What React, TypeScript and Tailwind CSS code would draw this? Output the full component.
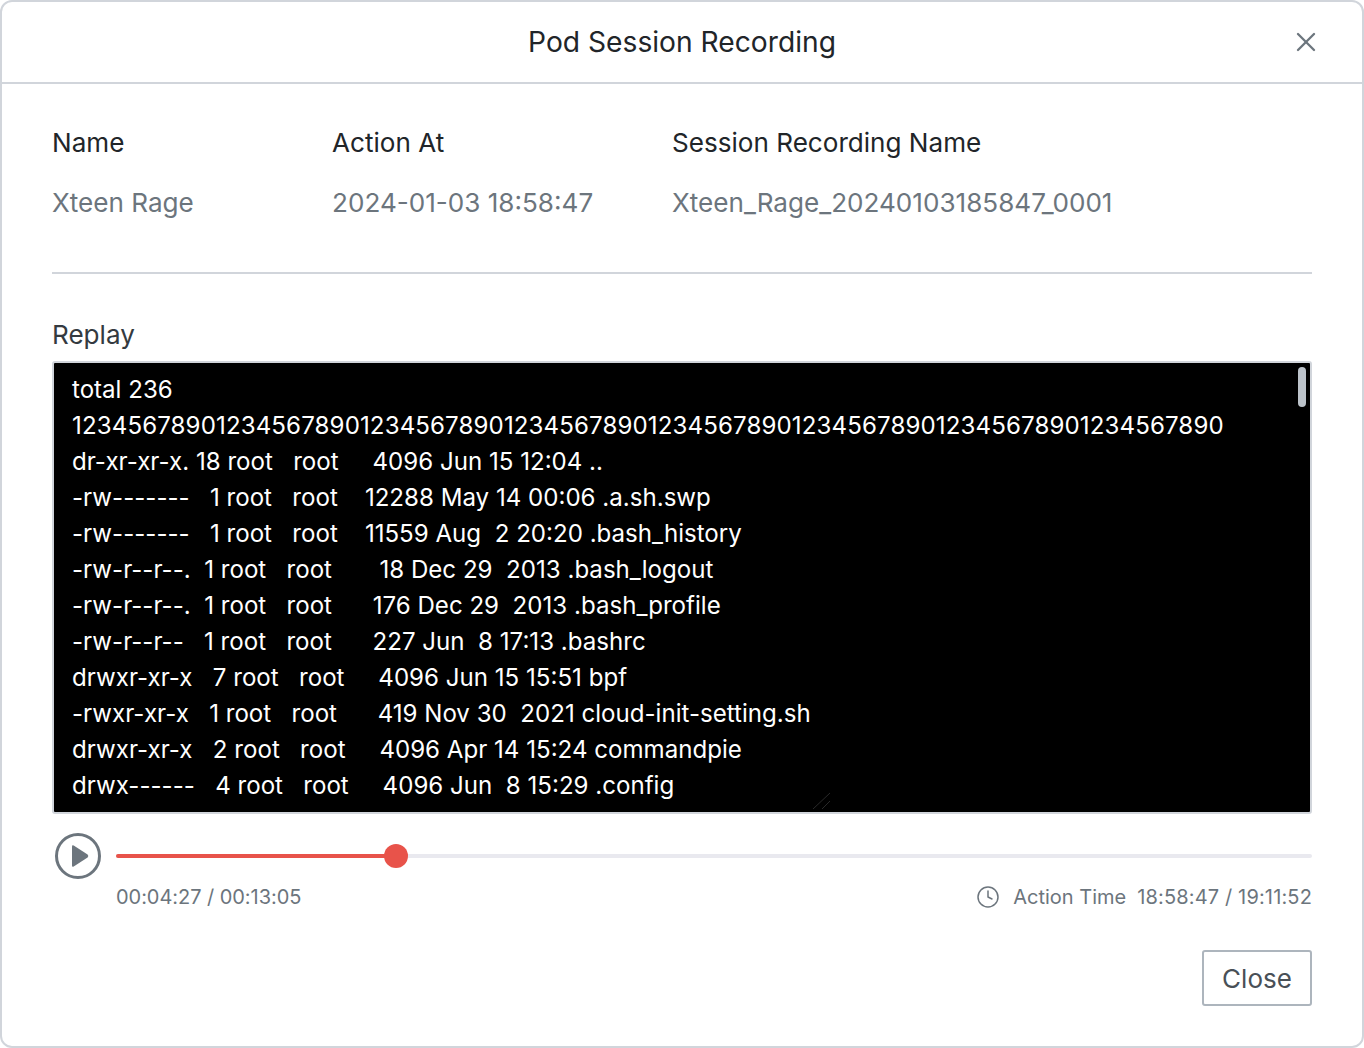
import { X, Clock } from "lucide-react";

const before = ["total 236"];
const digits = "12345678901234567890123456789012345678901234567890123456789012345678901234567890";
const lines = [
  "dr-xr-xr-x. 18 root   root     4096 Jun 15 12:04 ..",
  "-rw-------   1 root   root    12288 May 14 00:06 .a.sh.swp",
  "-rw-------   1 root   root    11559 Aug  2 20:20 .bash_history",
  "-rw-r--r--.  1 root   root       18 Dec 29  2013 .bash_logout",
  "-rw-r--r--.  1 root   root      176 Dec 29  2013 .bash_profile",
  "-rw-r--r--   1 root   root      227 Jun  8 17:13 .bashrc",
  "drwxr-xr-x   7 root   root     4096 Jun 15 15:51 bpf",
  "-rwxr-xr-x   1 root   root      419 Nov 30  2021 cloud-init-setting.sh",
  "drwxr-xr-x   2 root   root     4096 Apr 14 15:24 commandpie",
  "drwx------   4 root   root     4096 Jun  8 15:29 .config",
];

function InfoColumn({ label, value, className }: { label: string; value: string; className: string }) {
  return (
    <div className={className}>
      <div className="text-[26.1px] leading-[36px] text-[#212529]">{label}</div>
      <div className="mt-6 text-[26.1px] leading-[36px] text-[#6c757d]">{value}</div>
    </div>
  );
}

export default function App() {
  return (
    <div className="h-[1048px] w-[1364px] overflow-hidden rounded-xl border-2 border-[#d1d5db] bg-white font-['Inter',sans-serif]">
      <div className="relative flex h-[82px] items-center justify-center border-b-2 border-[#d1d5db]">
        <h1 className="text-[28.2px] leading-[36px] text-[#212529]">Pod Session Recording</h1>
        <button className="absolute right-[40px] top-[24px] text-[#6c757d]">
          <X size={32} strokeWidth={1.75} />
        </button>
      </div>

      <div className="px-[50px]">
        <div className="flex border-b-2 border-[#d1d5db] pt-[41px] pb-[51px]">
          <InfoColumn className="w-[280px]" label="Name" value="Xteen Rage" />
          <InfoColumn className="w-[340px]" label="Action At" value="2024-01-03 18:58:47" />
          <InfoColumn className="flex-1" label="Session Recording Name" value="Xteen_Rage_20240103185847_0001" />
        </div>

        <div className="mt-[43px] text-[26.1px] leading-[36px] text-[#343a40]">Replay</div>

        <div className="relative mt-[8px] h-[453px] overflow-hidden rounded-[3px] border-2 border-[#d1d5db] bg-black pt-[9px] pl-[18px]">
          <pre className="font-['Inter',sans-serif] text-[24.1px] leading-[36px] text-white">
            {before.join("\n")}
            {"\n"}
            <span className="tracking-[0.11px]">{digits}</span>
            {"\n"}
            {lines.join("\n")}
          </pre>
          <div className="absolute right-[4px] top-[4px] h-[40px] w-[8px] rounded-full bg-[#bcc3ca]" />
          <svg className="absolute bottom-[2px] left-[758px]" width="20" height="20" viewBox="0 0 20 20" stroke="#333333" strokeWidth="0.8">
            <path d="M1 19 L18 3" />
            <path d="M10 19 L18 11" />
          </svg>
        </div>

        <div className="mt-[18px] flex items-start">
          <svg width="48" height="48" viewBox="0 0 48 48" className="ml-[2px] shrink-0">
            <circle cx="24" cy="24" r="21.5" fill="none" stroke="#6c757d" strokeWidth="3" />
            <path d="M18 14.5 Q18 12.6 19.7 13.5 L33.6 22.6 Q35 24 33.6 25.4 L19.7 34.5 Q18 35.4 18 33.5 Z" fill="#6c757d" />
          </svg>
          <div className="ml-[14px] flex-1">
            <div className="relative mt-[22px] h-[4px] rounded-full bg-[#e9e9ef]">
              <div className="h-[4px] w-[280px] rounded-full bg-[#e8534a]" />
              <div className="absolute left-[268px] top-[-10px] h-[24px] w-[24px] rounded-full bg-[#e8534a]" />
            </div>
            <div className="mt-[24px] flex items-center justify-between text-[20px] leading-[30px] text-[#6c757d]">
              <span className="tracking-[-0.05px]">00:04:27 / 00:13:05</span>
              <span className="flex items-center">
                <Clock size={24} strokeWidth={1.5} className="mr-[13px]" />
                <span className="mr-[11px]">Action Time</span>
                <span className="tracking-[0.15px]">18:58:47 / 19:11:52</span>
              </span>
            </div>
          </div>
        </div>

        <div className="mt-[38px] flex justify-end">
          <button className="h-[56px] w-[110px] rounded-[3px] border-2 border-[#adb5bd] text-[26px] text-[#495057]">Close</button>
        </div>
      </div>
    </div>
  );
}
